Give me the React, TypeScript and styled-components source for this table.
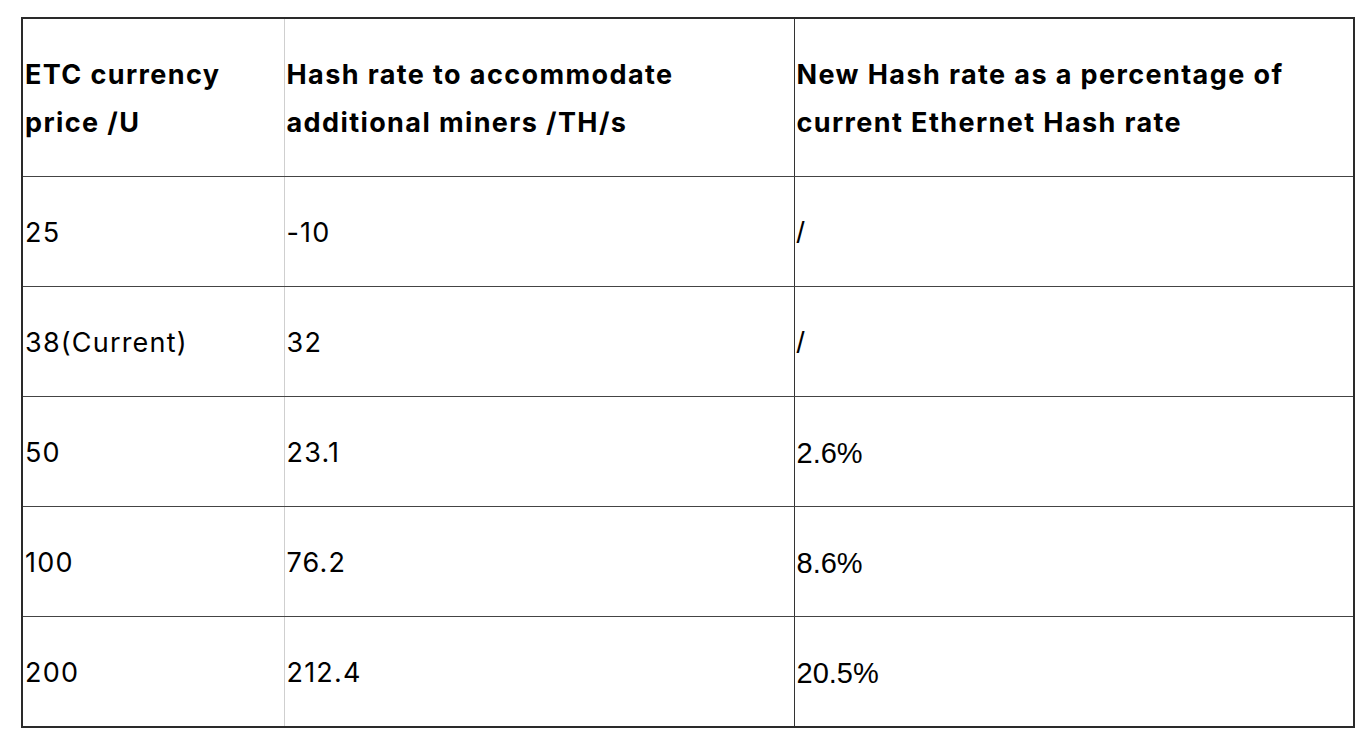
import styled, { createGlobalStyle } from "styled-components";

type Row = {
    price: string;
    hash: string;
    share: string;
};

const rows: Row[] = [
    {price: "25", hash: "-10", share: "/"},
    {price: "38(Current)", hash: "32", share: "/"},
    {price: "50", hash: "23.1", share: "2.6%"},
    {price: "100", hash: "76.2", share: "8.6%"},
    {price: "200", hash: "212.4", share: "20.5%"},
];

const GlobalStyle = createGlobalStyle`
    html, body {
        margin: 0;
        padding: 0;
        background: #ffffff;
    }
    body {
        font-family: Inter, "Noto Sans", sans-serif;
        color: #000;
    }
`;

export default function App() {
    return (
        <Page>
            <GlobalStyle/>
            <Table>
                <colgroup>
                    <col style={{width: 262}}/>
                    <col style={{width: 510}}/>
                    <col style={{width: 560}}/>
                </colgroup>
                <thead>
                <tr>
                    <HeadCell>ETC currency<br/>price /U</HeadCell>
                    <HeadCell $light>Hash rate to accommodate<br/>additional miners /TH/s</HeadCell>
                    <HeadCell>New Hash rate as a percentage of<br/>current Ethernet Hash rate</HeadCell>
                </tr>
                </thead>
                <tbody>
                {rows.map((row) => (
                    <tr key={row.price}>
                        <Cell>{row.price}</Cell>
                        <Cell $light>{row.hash}</Cell>
                        <Cell $arial>{row.share}</Cell>
                    </tr>
                ))}
                </tbody>
            </Table>
        </Page>
    );
}

const Page = styled.div`
    padding: 17px 0 0 21px;
`

const Table = styled.table`
    width: 1333px;
    table-layout: fixed;
    border-collapse: collapse;
    border: 2px solid #2a2a2a;
`

const HeadCell = styled.th<{ $light?: boolean }>`
    height: 155px;
    padding: 2px 2px 0;
    text-align: left;
    vertical-align: middle;
    font-size: 27px;
    font-weight: 700;
    letter-spacing: 1.4px;
    line-height: 48px;
    white-space: nowrap;
    border-bottom: 1px solid #444;
    border-left: 1px solid ${p => p.$light ? "#cfcfcf" : "#333"};
`

const Cell = styled.td<{ $light?: boolean; $arial?: boolean }>`
    height: 107px;
    padding: 2px 2px 0;
    vertical-align: middle;
    font-size: ${p => p.$arial ? "29px" : "27px"};
    letter-spacing: ${p => p.$arial ? "0" : "1.2px"};
    line-height: 48px;
    font-family: ${p => p.$arial ? `"Liberation Sans", Arial, sans-serif` : `Inter, "Noto Sans", sans-serif`};
    border-bottom: 1px solid #444;
    border-left: 1px solid ${p => p.$light ? "#cfcfcf" : "#333"};
`
